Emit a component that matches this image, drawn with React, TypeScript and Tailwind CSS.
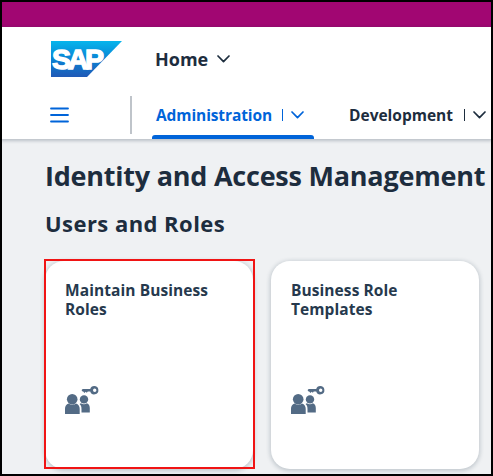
import React from "react";

function Chevron({ className }: { className: string }) {
  return (
    <svg className={className} width={13} height={8} viewBox="0 0 13 8" fill="none" stroke="currentColor" strokeWidth="1.7" strokeLinecap="round" strokeLinejoin="round">
      <path d="M1 1l5.5 5.6L12 1" />
    </svg>
  );
}

function SapLogo() {
  return (
    <svg className="ml-[49px] mt-px shrink-0" width="71" height="36" viewBox="0 0 71 36" role="img" aria-label="SAP">
      <defs>
        <linearGradient id="sapBlue" x1="0" y1="0" x2="0" y2="1">
          <stop offset="0" stopColor="#06b5ec" />
          <stop offset="0.5" stopColor="#0a83d4" />
          <stop offset="1" stopColor="#2059b6" />
        </linearGradient>
      </defs>
      <path d="M0 0H71L36 36H0Z" fill="url(#sapBlue)" />
      <text x="1" y="28" textLength="52" lengthAdjust="spacing" fill="#fff" stroke="#fff" strokeWidth="1.4" fontFamily="'Liberation Sans', sans-serif" fontWeight="700" fontSize="28.500">
        SAP
      </text>
    </svg>
  );
}

function UsersKeyIcon() {
  return (
    <svg className="mt-auto block" width="34" height="29" viewBox="0 0 34 29" fill="#536b85">
      <circle cx="19" cy="13.400" r="4.200" />
      <path d="M15.900 17.200c1.800 1.300 4.400 1.300 6 0 1.900.8 2.900 2.600 2.900 4.800V26.500h-8.300V23c0-2.200-.6-3.800-1.900-4.900z" />
      <circle cx="7.200" cy="13.200" r="5.300" />
      <path d="M3.600 17.600C1.200 18.400 0 20.300 0 22.800V28h14.700v-5.200c0-2.500-1.300-4.400-3.700-5.200-2 1.600-5.300 1.600-7.400 0z" />
      <path fillRule="evenodd" d="M29.200 0a4.200 4.200 0 1 1-4 5.500h-2.400l-1 1.200-1.100-1-1.300 1.400-1.200-1.600-1.100-.2c-.8-.9-.2-2.200 1-2.200h7.100A4.200 4.200 0 0 1 29.200 0zm.5 2.500a1.700 1.700 0 1 0 0 3.400 1.700 1.700 0 0 0 0-3.400z" />
    </svg>
  );
}

function Tile({ lines, highlighted = false }: { lines: [string, string]; highlighted?: boolean }) {
  return (
    <section className="relative flex h-[208px] w-[208px] shrink-0 flex-col rounded-[19px] bg-white pb-[54px] pl-[20px] pt-[20px] shadow-[0_1px_4px_1px_rgba(34,53,72,0.22)]">
      <h3 className="whitespace-nowrap text-[15.5px] font-bold leading-[19px] tracking-[0.08px] text-[#26394d]">
        <span className="block">{lines[0]}</span>
        <span className="block">{lines[1]}</span>
      </h3>
      <UsersKeyIcon />
      {highlighted && <div className="absolute -left-px -top-[2px] h-[210px] w-[211px] border-2 border-[#f01414]" />}
    </section>
  );
}

export default function App() {
  return (
    <div className="flex h-[476px] w-[493px] flex-col overflow-hidden border-2 border-black bg-[#eff1f3] font-['Open_Sans','Noto_Sans',sans-serif] text-[#1d2d3e]">
      <div className="h-[25px] shrink-0 bg-[#a10672]" />
      <header className="relative z-10 h-[112px] shrink-0 bg-white shadow-[0_1px_3px_1px_rgba(34,53,72,0.25)]">
        <div className="flex h-[62px] items-center">
          <SapLogo />
          <button className="ml-[33px] mt-px flex items-center text-[18px] font-bold leading-6">
            <span className="w-[53px] text-left">Home</span>
            <Chevron className="ml-[9px]" />
          </button>
        </div>
        <nav className="flex h-[50px] text-[15.5px] font-bold leading-6">
          <svg className="ml-[48px] mt-[18px] shrink-0" width="19" height="16" viewBox="0 0 19 16" stroke="#0064d9" strokeWidth="1.8" strokeLinecap="round">
            <path d="M1 1.500h17M1 8h17M1 14.500h17" />
          </svg>
          <div className="ml-[61px] mt-[7px] h-[38px] w-[2px] shrink-0 bg-[#bfc4ca]" />
          <div className="ml-[20px] flex w-[162px] shrink-0 flex-col text-[#0064d9]">
            <div className="flex h-[46px] shrink-0 items-center pl-[4px] pt-[5px]">
              <span className="w-[115px] whitespace-nowrap tracking-[-0.1px]">Administration</span>
              <span className="ml-[11px] h-[12px] w-px bg-current" />
              <Chevron className="ml-[8px]" />
            </div>
            <div className="h-[4px] shrink-0 rounded-t-[3px] bg-[#0064d9]" />
          </div>
          <div className="ml-[35px] flex h-[46px] shrink-0 items-center pt-[5px]">
            <span className="w-[105px] whitespace-nowrap">Development</span>
            <span className="ml-[10px] h-[12px] w-px bg-current" />
            <Chevron className="ml-[8px]" />
          </div>
        </nav>
      </header>
      <main className="pl-[43px]">
        <h1 className="mt-[18px] whitespace-nowrap text-[27px] font-bold leading-[38px] tracking-[-0.23px]">Identity and Access Management</h1>
        <h2 className="mt-[13px] whitespace-nowrap text-[22px] font-bold leading-[30px] tracking-[0.45px]">Users and Roles</h2>
        <div className="mt-[23px] flex gap-[18px]">
          <Tile lines={["Maintain Business", "Roles"]} highlighted />
          <Tile lines={["Business Role", "Templates"]} />
        </div>
      </main>
    </div>
  );
}
